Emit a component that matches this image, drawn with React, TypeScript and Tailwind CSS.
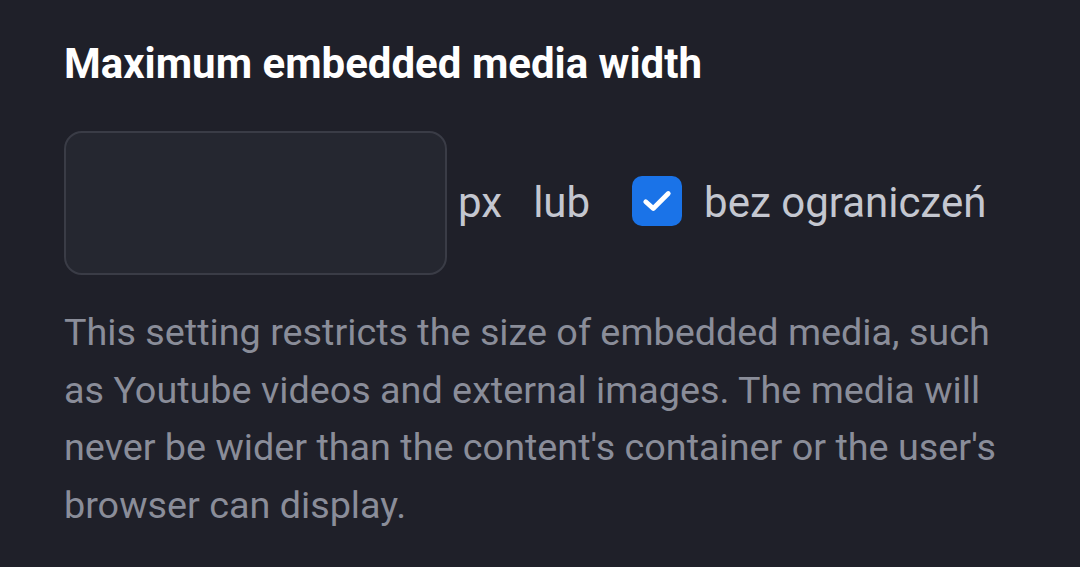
import { useState } from 'react';

export default function App() {
  const [unlimited, setUnlimited] = useState(true);

  return (
    <div className="min-h-[567px] w-[1080px] bg-[#1f2029] pl-16 pr-10 pt-[39px] font-['Roboto',sans-serif]">
      <h2 className="text-[42px] font-bold leading-[50px] text-white">Maximum embedded media width</h2>

      <div className="mt-[42px] flex items-center">
        <input
          type="text"
          className="h-[144px] w-[383px] rounded-[18px] border-2 border-[#3a3c46] bg-[#252730] px-5 text-[42px] text-[#c4c7d0] outline-none"
        />
        <span className="mb-[2px] ml-[11px] text-[42px] text-[#c4c7d0]">px</span>
        <span className="mb-[2px] ml-[31px] text-[42px] text-[#c4c7d0]">lub</span>
        <label className="ml-[42px] flex cursor-pointer items-center">
          <button
            type="button"
            onClick={() => setUnlimited(!unlimited)}
            className="mb-[5px] flex h-[50px] w-[50px] items-center justify-center rounded-[10px] bg-[#1a73e8]"
          >
            {unlimited && (
              <svg width="36" height="36" viewBox="0 0 24 24" fill="none" stroke="white" strokeWidth="3.2" strokeLinecap="round" strokeLinejoin="round">
                <path d="M4.5 12.5l5 4.5L19.5 7" />
              </svg>
            )}
          </button>
          <span className="mb-[2px] ml-[22px] text-[42px] text-[#c4c7d0]">bez ograniczeń</span>
        </label>
      </div>

      <p className="mt-[29px] max-w-[950px] text-[37.75px] leading-[57.5px] text-[#8a8d99]">
        This setting restricts the size of embedded media, such as Youtube videos and external images. The media will
        never be wider than the content's container or the user's browser can display.
      </p>
    </div>
  );
}
